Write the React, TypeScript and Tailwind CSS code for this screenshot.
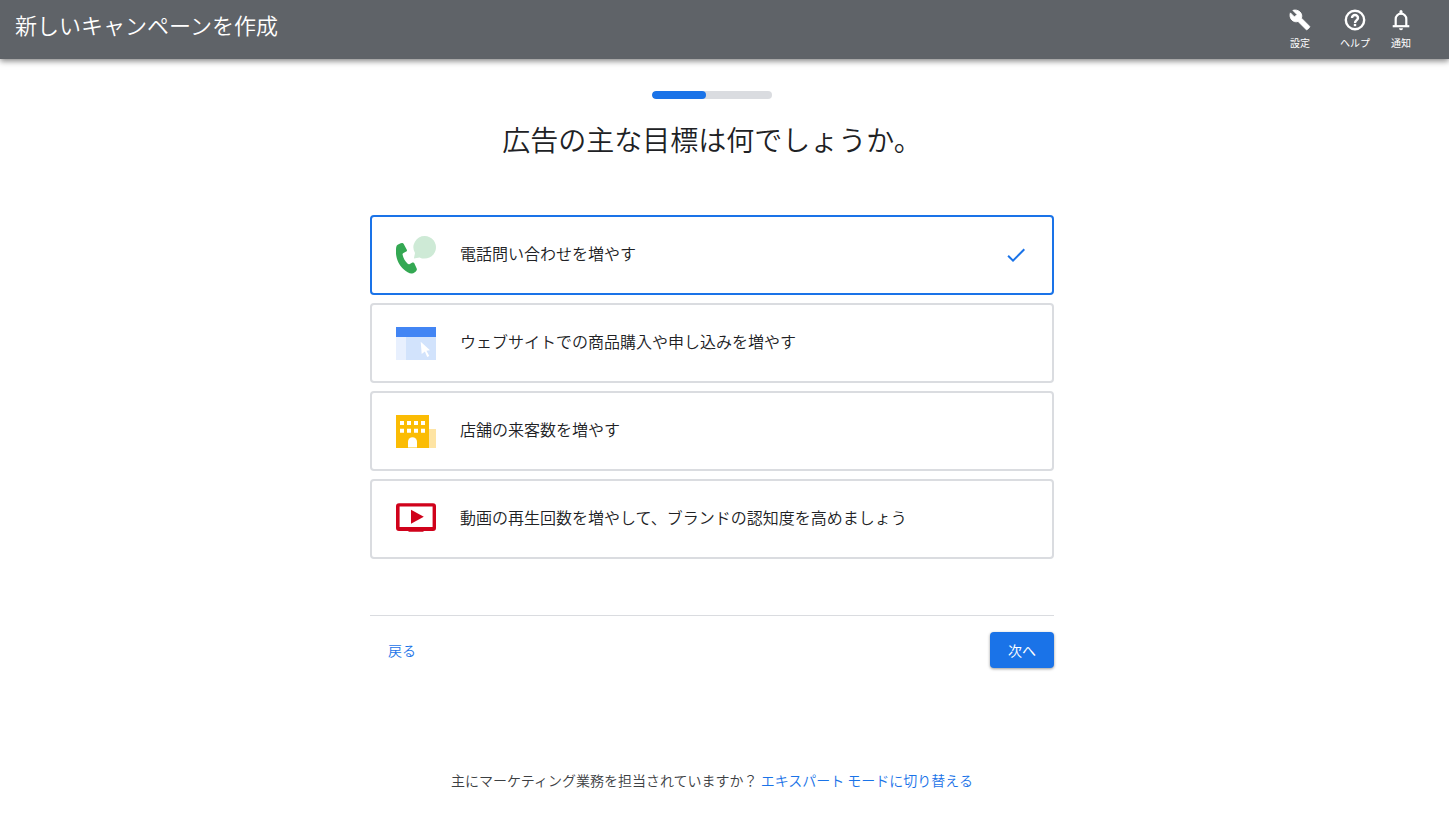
import { useState, type ReactNode } from "react";
import { MdCheck } from "react-icons/md";

function PhoneIcon() {
  return (
    <svg viewBox="0 0 40 40" className="size-10 shrink-0" aria-hidden="true">
      <path
        d="M28.7 1A11.3 11.3 0 1 1 23.6 22.4L17.9 23.6L19 18A11.3 11.3 0 0 1 28.7 1Z"
        fill="#ceead6"
      />
      <path
        d="M.8 10.6C1.5 9.4 4.6 8.3 6 8.1C6.8 8 7.3 8.4 7.7 9.1L10.8 14.7C11.2 15.5 10.9 16.1 10.2 16.5L7.5 17.9C6.8 18.3 6.4 18.9 6.6 19.7C7.3 23.2 9.2 26.4 11.7 28.7C12.3 29.3 13.1 29.3 13.8 28.9L16.4 27.6C17.2 27.2 17.9 27.4 18.3 28.2L20.7 33.6C21 34.3 20.9 34.9 20.5 35.5C19.4 37.2 17.7 38.2 16 38.5C13.8 38.8 10.5 37.1 7 33.8C3.2 30.2 .5 24.5 0 18.8C-.2 15.3 0 12 .8 10.6Z"
        fill="#34a853"
      />
    </svg>
  );
}

function WebsiteIcon() {
  return (
    <svg viewBox="0 0 40 40" className="size-10 shrink-0" aria-hidden="true">
      <path d="M0 4H40V14H0Z" fill="#4285f4" />
      <path d="M0 14H10V37H0Z" fill="#e8f0fe" />
      <path d="M10 14H40V37H10Z" fill="#d2e3fc" />
      <path d="M24.7 18.7L34 27.3L30.4 27.7L33.3 33L31.2 34L28.9 28.6L25.7 31Z" fill="#fff" />
    </svg>
  );
}

function StoreIcon() {
  return (
    <svg viewBox="0 0 40 40" className="size-10 shrink-0" aria-hidden="true">
      <path d="M33 18H40V37H33Z" fill="#fee4a3" />
      <path d="M0 4H33V37H0Z" fill="#fbbc04" />
      <path
        d="M4 10H8V14H4ZM11 10H15V14H11ZM18 10H22V14H18ZM25 10H29V14H25ZM4 17.7H8V21.7H4ZM11 17.7H15V21.7H11ZM18 17.7H22V21.7H18ZM25 17.7H29V21.7H25Z"
        fill="#fff"
      />
      <path d="M12 36.6V30.8A4.5 4.5 0 0 1 21 30.8V36.6Z" fill="#fff" />
    </svg>
  );
}

function VideoIcon() {
  return (
    <svg viewBox="0 0 40 40" className="size-10 shrink-0" aria-hidden="true">
      <path
        fillRule="evenodd"
        d="M3 4.2H37A3 3 0 0 1 40 7.2V29A3 3 0 0 1 37 32H27.5V32.8H12.5V32H3A3 3 0 0 1 0 29V7.2A3 3 0 0 1 3 4.2ZM3.6 7.4V28H36.6V7.4Z"
        fill="#d0021b"
      />
      <path d="M15 10.7L27.8 17.7L15 24.7Z" fill="#d0021b" />
    </svg>
  );
}

type Goal = { id: string; label: string; icon: ReactNode };

const goals: Goal[] = [
  { id: "calls", label: "電話問い合わせを増やす", icon: <PhoneIcon /> },
  { id: "website", label: "ウェブサイトでの商品購入や申し込みを増やす", icon: <WebsiteIcon /> },
  { id: "visits", label: "店舗の来客数を増やす", icon: <StoreIcon /> },
  { id: "video", label: "動画の再生回数を増やして、ブランドの認知度を高めましょう", icon: <VideoIcon /> },
];

function WrenchIcon() {
  return (
    <svg viewBox="-1.5 -1.5 27 27" className="size-6" fill="currentColor" stroke="currentColor" aria-hidden="true">
      <path d="M22.7 19L13.6 9.9C14.5 7.6 14 4.9 12.1 3C10.1 1 6.6.2 4 1.2L8.6 5.8 5.8 8.6 1.2 4C.2 6.6.9 10.1 2.9 12.1C4.8 14 7.5 14.5 9.8 13.6L18.9 22.7C19.3 23.1 19.9 23.1 20.3 22.7L22.6 20.4C23.1 20 23.1 19.3 22.7 19Z" />
    </svg>
  );
}

function HelpIcon() {
  return (
    <svg viewBox="0 0 24 24" className="size-6" fill="none" stroke="currentColor" strokeWidth="2.4" aria-hidden="true">
      <circle cx="12" cy="12" r="9.2" />
      <path d="M9 10a3 3 0 1 1 6 0c0 2-3 2.2-3 5" />
      <path d="M12 15.9v2.3" />
    </svg>
  );
}

function BellIcon() {
  return (
    <svg viewBox="0 0 24 24" className="size-6" fill="none" stroke="currentColor" strokeWidth="2.2" aria-hidden="true">
      <path d="M6.7 18v-7a5.3 5.3 0 0 1 10.6 0v7" />
      <path d="M3.7 18.2h16.6" />
      <path d="M12 3.5v1.5" strokeWidth="3" strokeLinecap="round" />
      <path d="M10 20.2h4a2 2 0 0 1-4 0z" fill="currentColor" stroke="none" />
    </svg>
  );
}

function Header() {
  return (
    <header className="flex h-[59px] items-start justify-between bg-[#5f6368] pr-9 pl-[15px] text-white shadow-[0_2px_6px_rgba(0,0,0,0.5)]">
      <h1 className="pt-2 text-[22px] leading-8">新しいキャンペーンを作成</h1>
      <nav className="flex gap-[19px] pt-2 text-[10px] leading-[22px] font-normal">
        <button type="button" className="mr-[9px] flex flex-col items-center">
          <WrenchIcon />
          設定
        </button>
        <button type="button" className="flex flex-col items-center">
          <HelpIcon />
          ヘルプ
        </button>
        <button type="button" className="flex flex-col items-center">
          <BellIcon />
          通知
        </button>
      </nav>
    </header>
  );
}

export default function App() {
  const [selected, setSelected] = useState("calls");

  return (
    <div className="min-h-screen bg-white font-['Noto_Sans_CJK_JP',sans-serif] font-[350] text-[#202124]">
      <Header />

      <main className="flex flex-col items-center pt-8 pr-[25px] pb-7">
        <div
          role="progressbar"
          aria-label="進行状況"
          aria-valuenow={45}
          className="h-2 w-[120px] overflow-hidden rounded-full bg-[#dadce0]"
        >
          <div className="h-full w-[45%] rounded-full bg-[#1a73e8]" />
        </div>

        <h2 className="mt-5 text-[28px] leading-10">広告の主な目標は何でしょうか。</h2>

        <div className="w-full max-w-[684px]">
          <div role="radiogroup" aria-label="広告の主な目標" className="mt-14 flex flex-col gap-2">
            {goals.map((goal) => (
              <label
                key={goal.id}
                className="relative flex h-20 cursor-pointer items-center gap-6 rounded border-2 border-[#dadce0] px-6 has-checked:border-[#1a73e8]"
              >
                <input
                  type="radio"
                  name="goal"
                  value={goal.id}
                  checked={selected === goal.id}
                  onChange={() => setSelected(goal.id)}
                  className="sr-only"
                />
                {goal.icon}
                <span className="flex-1 pb-1 text-base">{goal.label}</span>
                {selected === goal.id && <MdCheck className="size-6 text-[#1a73e8]" />}
              </label>
            ))}
          </div>

          <div className="mt-14 flex items-center justify-between border-t border-[#dadce0] pt-4 text-sm">
            <button type="button" className="h-9 px-[18px] text-[#1a73e8]">
              戻る
            </button>
            <button
              type="button"
              className="h-9 w-16 rounded bg-[#1a73e8] font-normal text-white shadow-[0_1px_3px_rgba(0,0,0,0.4)]"
            >
              次へ
            </button>
          </div>
        </div>

        <p className="mt-[102px] text-sm text-[#3c4043]">
          主にマーケティング業務を担当されていますか？{" "}
          <a href="#expert" className="text-[#1a73e8]">
            エキスパート モードに切り替える
          </a>
        </p>
      </main>
    </div>
  );
}
